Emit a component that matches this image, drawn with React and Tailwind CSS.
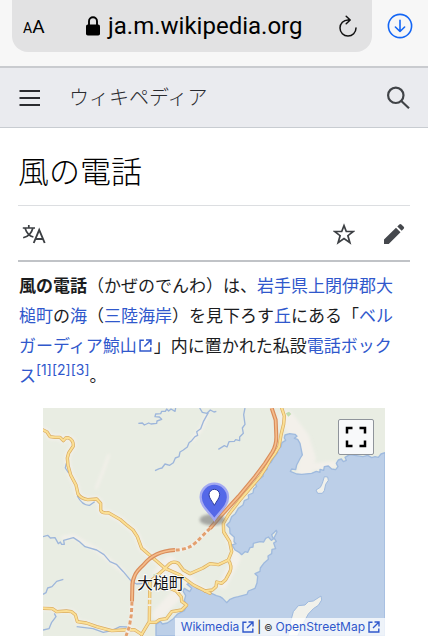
import React from 'react'

const TRUNK = "M686 0 L698 36 L700 86 Q700 112 688 132 L666 166 L636 206 L586 266 L536 321 L501 361"
const TRUNK_SOUTH = "M396 426 Q364 428 341 439 Q318 450 301 471 Q282 488 276 501 Q267 520 268 536 L267 581"
const TUNNELS = ["M501 361 L481 381 Q456 408 441 416 Q420 426 396 426", "M267 581 L265 620 L259 656 L249 684"]

const ROADS = [
  "M0 66 L12 72 L21 86 L36 88 L51 88 L61 98 L68 90 L76 89 Q92 96 91 114 L77 135 L73 150 L75 172 L83 201 L99 231 L105 258 Q114 272 134 275 L161 273 L173 286 L173 306 Q176 317 196 314 L231 334 L251 351 L270 366 L283 386 L296 421 L331 451 L366 481 L411 501 L451 531 L501 556",
  "M716 0 L724 24 L722 48 L714 81 L708 116 L696 136 L681 156 L668 180 L651 206 L621 241 L591 276 L556 321 L541 346 L542 372 L560 401 L566 431 L556 456 L526 470 L501 467 L480 480 L441 497 L421 486 L406 466 Q391 458 380 467 L361 486 L321 521 L320 560 L319 641 L296 679",
  "M556 456 Q568 474 561 491 L548 515 L536 526 L521 522 L519 536 L508 546 L486 549",
  "M381 541 L401 550 L415 567 L416 580 L431 591 L416 606 L386 611 L370 632 L350 635 L338 643 L321 643",
  "M0 601 L28 602 L41 611 L70 609 L86 611 L97 620 L103 641 L130 645 L161 656 L206 668 L241 666 L274 665 L296 679",
]

const RIVERS = [
  "M286 46 L298 45 L304 51 L317 45 L324 48 L341 46 L342 39 L356 34 L349 27 L336 26 L338 18 L353 17 L356 10 L367 10 L371 3 L377 9 L384 3 L396 10 L398 0",
  "M336 188 L349 182 L357 180 L366 168 L380 172 L391 164 L397 150 L408 146 L411 132 L421 126 L433 117 L438 104 L446 98 L456 86 L464 82 L461 71 L473 62 L481 41 L496 14",
  "M526 124 L544 113 L552 117 L558 101 L574 100 L578 95 L590 98 L590 87 L601 76 L598 60 L606 49 L602 20 L606 0",
  "M470 0 L478 13 L492 16 L502 6 L513 12 L520 10",
  "M0 386 L14 382 L22 390 L36 389 L46 407 L52 402 L56 409 L64 409 L62 397 L91 389 L108 400 L126 416 L161 426 L183 440 L201 461 L220 469 L241 491 L266 521 L281 528 L301 526",
  "M0 559 L9 554 L14 540 L27 536 L41 520 L61 514",
  "M0 666 L18 662 L26 643 L39 626 L34 616",
  "M70 166 L67 180 L77 195",
  "M103 264 Q118 293 140 292 L155 281",
  "M101 656 L150 662 L181 673 L206 668 L231 656 L251 657 L266 668",
]

const SEA = "M1026 134 L1014 138 L1006 148 L996 146 L986 149 L974 142 L960 146 L920 140 L906 148 L910 157 L901 161 L895 153 L886 156 L880 166 L885 176 L878 185 L866 183 L856 174 L844 176 L842 187 L831 184 L831 193 L820 190 L806 196 L776 199 L761 198 L742 190 L746 183 L758 185 L761 171 L772 150 L778 141 L771 106 L764 94 L754 91 L762 85 L756 79 L740 77 L726 81 L724 90 L728 97 L717 104 L714 116 L702 126 L704 134 L691 151 L684 163 L671 171 L673 183 L662 193 L660 205 L649 214 L636 226 L641 235 L632 243 L630 255 L616 261 L617 272 L604 278 L600 291 L586 301 L577 317 L566 326 L560 342 L551 351 L560 360 L561 376 L574 388 L573 401 L579 407 L567 411 L576 426 L590 434 L596 440 L606 431 L614 433 L621 419 L630 417 L631 406 L651 401 L662 402 L668 391 L676 387 L685 397 L691 393 L686 380 L694 373 L700 367 L702 372 L693 390 L700 400 L692 405 L698 422 L687 424 L686 437 L675 444 L676 454 L664 464 L652 480 L651 490 L636 497 L644 505 L642 525 L636 541 L616 549 L612 559 L586 566 L573 569 L561 574 L551 584 L539 571 L531 566 L520 563 L506 556 L486 549 L461 541 L451 530 L441 524 L432 529 L446 541 L440 551 L424 541 L420 549 L428 563 L424 578 L432 592 L424 608 L404 618 L391 632 L373 645 L358 648 L352 640 L339 649 L339 684 L1026 684 Z"

function CoastMap() {
  return (
    <svg viewBox="0 0 1026 684" className="block w-full h-full" role="img" aria-label="大槌町の地図">
      <defs>
        <filter id="soft"><feGaussianBlur stdDeviation="5" /></filter>
      </defs>
      <rect width="1026" height="684" fill="#e9ede3" />

      {/* valleys and settlements */}
      <g fill="none" stroke="#f3f0ea" strokeLinecap="round" strokeLinejoin="round" filter="url(#soft)">
        <path strokeWidth="18" d={ROADS[0]} />
        <path strokeWidth="14" d={ROADS[4]} />
        <path strokeWidth="12" d="M60 389 L91 385 L161 426 L241 491" />
        <path strokeWidth="12" d="M450 95 L475 60 L492 20" />
        <path strokeWidth="8" d="M197 142 L180 190 L160 240" />
        <path strokeWidth="34" d="M345 500 L380 460 L400 500 L440 520" />
        <path strokeWidth="34" d="M345 620 L400 560" />
        <path strokeWidth="26" d="M560 390 L580 450 L540 530" />
        <path strokeWidth="46" d="M730 30 L775 90 L795 150 L785 185" />
        <path strokeWidth="22" d="M800 178 L870 170" />
      </g>

      <path d={SEA} fill="#bccfe8" stroke="#9fbade" strokeWidth="4" strokeLinejoin="round" />
      <g fill="#f1f1eb" stroke="#9fbade" strokeWidth="3" strokeLinejoin="round">
        <path d="M844 206 L854 207 L856 217 L848 229 L844 248 L838 256 L824 256 L819 246 L832 238 L838 226 Z" />
        <path d="M735 684 L743 640 L751 611 L766 593 L786 591 L796 581 L811 579 L834 564 L836 576 L826 592 L811 602 L796 618 L784 640 L764 684 Z" />
      </g>
      <path d="M728 16 L738 11 L745 18 L736 26 Z M330 500 L345 494 L351 504 L336 508 Z" fill="#bfdcae" />

      <g fill="none" stroke="#9db6db" strokeWidth="4" strokeLinejoin="round">
        {RIVERS.map((d) => <path key={d} d={d} />)}
      </g>

      <g fill="none" strokeLinecap="round" strokeLinejoin="round">
        {ROADS.map((d) => <path key={d} d={d} stroke="#d9ac62" strokeWidth="10" />)}
        {ROADS.map((d) => <path key={d} d={d} stroke="#fbdf94" strokeWidth="6" />)}
      </g>
      <g fill="none" strokeLinejoin="round">
        <path d={TRUNK} stroke="#d98d5c" strokeWidth="12" />
        <path d={TRUNK} stroke="#f5bd8b" strokeWidth="5" />
        <path d={TRUNK_SOUTH} stroke="#d98d5c" strokeWidth="12" />
        <path d={TRUNK_SOUTH} stroke="#f5bd8b" strokeWidth="5" />
        {TUNNELS.map((d) => <path key={d} d={d} stroke="#f3f0ea" strokeWidth="12" />)}
        {TUNNELS.map((d) => <path key={d} d={d} stroke="#e3a06f" strokeWidth="9" strokeDasharray="12 7" />)}
        <path d="M320 570 L320 604" stroke="#f3f0ea" strokeWidth="12" strokeDasharray="5 14" />
      </g>

      {/* marker */}
      <ellipse cx="508" cy="335" rx="38" ry="17" fill="#777" opacity="0.6" filter="url(#soft)" />
      <path d="M514 335 C500 312 473 296 473 268 A41 41 0 0 1 555 268 C555 296 528 312 514 335 Z" fill="#5468e8" stroke="#a3a9f2" strokeWidth="7" />
      <path d="M514 292 C508 280 498 270 498 260 A16 16 0 0 1 530 260 C530 270 520 280 514 292 Z" fill="#fff" stroke="#2b3a9c" strokeWidth="3" />

      <text
        x="283" y="543" fontSize="47" fill="#111" stroke="#fff" strokeWidth="5" paintOrder="stroke"
        className="font-['Noto_Sans_CJK_JP',sans-serif]"
      >
        大槌町
      </text>
    </svg>
  )
}

function ExternalIcon({ className }) {
  return (
    <svg viewBox="0 0 12 12" className={className} fill="none" stroke="currentColor" strokeWidth="1.4" aria-hidden="true">
      <path d="M4.5 1.2H1v9.8h9.8V7.5M6.5 1H11v4.5M11 1L5 7" />
    </svg>
  )
}

function A({ children }) {
  return <a href="#" className="text-[#3058cc]">{children}</a>
}

function BrowserBar() {
  return (
    <div className="flex h-[66px] bg-[#f7f7f7] pl-3">
      <div className="flex h-[52px] flex-1 items-center rounded-b-2xl bg-[#e2e2e3] pl-[11px] pr-3.5 text-black">
        <button type="button" aria-label="ページ設定" className="flex items-baseline font-[Roboto,sans-serif] leading-none">
          <span className="text-[14px]">A</span>
          <span className="text-[19px]">A</span>
        </button>
        <div className="flex flex-1 items-center justify-center gap-2 pl-1.5">
          <svg viewBox="0 0 14 20" className="w-3.5 h-5" aria-hidden="true">
            <rect y="8.5" width="14" height="11" rx="1.8" fill="#000" />
            <path d="M3 9V5.2a4 4 0 0 1 8 0V9" fill="none" stroke="#000" strokeWidth="1.9" />
          </svg>
          <span className="font-[Roboto,sans-serif] text-[24px] leading-8">ja.m.wikipedia.org</span>
        </div>
        <button type="button" aria-label="再読み込み">
          <svg viewBox="0 0 20 22" className="w-5 h-[22px]" fill="none" stroke="#111" strokeWidth="1.5" strokeLinecap="round" strokeLinejoin="round">
            <path d="M11.5 5H10a8 8 0 1 0 8 8M8.2 1.2L12.2 5 8.2 8.8" />
          </svg>
        </button>
      </div>
      <div className="flex h-[52px] w-14 items-center justify-center">
        <button type="button" aria-label="ダウンロード">
          <svg viewBox="0 0 26 26" className="size-[26px]" fill="none" stroke="#1366f5" strokeWidth="1.6" strokeLinecap="round" strokeLinejoin="round">
            <circle cx="13" cy="13" r="11.6" />
            <path d="M13 7.2v11.2M8.4 14l4.6 4.5 4.6-4.5" />
          </svg>
        </button>
      </div>
    </div>
  )
}

function SiteHeader() {
  return (
    <header className="flex h-[62px] items-center border-t-2 border-b border-t-[#c9cbcf] border-b-[#c8ccd1] bg-[#eaebef] pl-[19px] pr-[18px]">
      <button type="button" aria-label="メニュー">
        <svg viewBox="0 0 22 18" className="w-[22px] h-[18px]" stroke="#2a2b2f" strokeWidth="2">
          <path d="M0.5 2H21M0.5 9H21M0.5 16H21" />
        </svg>
      </button>
      <a href="#" className="ml-7 text-[20px] font-light leading-8 text-[#2a2b2f]">ウィキペディア</a>
      <button type="button" aria-label="検索" className="ml-auto">
        <svg viewBox="0 0 24 24" className="size-6" fill="none" stroke="#404347" strokeWidth="2.2">
          <circle cx="9.8" cy="9.3" r="7.7" />
          <path d="M15.3 15l7.7 7.2" />
        </svg>
      </button>
    </header>
  )
}

export default function App() {
  return (
    <div className="min-h-screen bg-white font-[Inter,'Noto_Sans_CJK_JP',sans-serif] text-[#1b1c1e]" lang="ja">
      <BrowserBar />
      <SiteHeader />

      <main className="px-[18px] pt-5 pb-1">
        <h1 className="border-b border-[#dcdee1] pt-1 pb-[13px] text-[31px] font-light leading-10 text-black">風の電話</h1>

        {/* Page actions */}
        <div className="flex h-14 items-center border-b-2 border-[#c0c3c7] pl-1 pr-[5px] pt-px">
          <button type="button" aria-label="言語">
            <svg viewBox="0 0 24 20" className="w-6 h-5" fill="none" stroke="#3c3f43" strokeWidth="1.7">
              <path d="M0.8 4H13M6.8 1v3M10.8 4.2C9.6 9.2 5.8 12.5 1.2 13.8M3.2 4.5C4.6 9 7.5 12 11.4 13" />
              <path d="M11.7 19L17.2 6 22.7 19M13.4 15h7.6" strokeWidth="1.9" />
            </svg>
          </button>
          <button type="button" aria-label="ウォッチリスト" className="ml-auto">
            <svg viewBox="0 0 22 22" className="size-[22px]" fill="none" stroke="#3c3f43" strokeWidth="1.7">
              <path d="M11 2.6l2.3 5.9h7l-5.4 4.2 2 7-5.9-4.1-5.9 4.1 2-7-5.4-4.2h7z" />
            </svg>
          </button>
          <button type="button" aria-label="編集" className="ml-7">
            <svg viewBox="0 0 22 22" className="size-[22px]" fill="#45484d">
              <path d="M1 16.5L13 4.7l4.5 4.5L5.7 21H1z M14.3 3.4l2-2a1.5 1.5 0 0 1 2.1 0l2.3 2.3a1.5 1.5 0 0 1 0 2.1l-2 2z" />
            </svg>
          </button>
        </div>

        <p className="mt-[9px] pl-px pr-3 text-[17px] leading-[30px]">
          <b className="font-bold">風の電話</b>（かぜのでんわ）は、<A>岩手県上閉伊郡大槌町</A>の<A>海</A>（<A>三陸海岸</A>）を見下ろす<A>丘</A>にある「<A>ベルガーディア鯨山<ExternalIcon className="mx-0.5 inline size-[13px] align-baseline" /></A>」内に置かれた私設<A>電話ボックス</A><sup className="text-[14px] leading-none"><A>[1]</A><A>[2]</A><A>[3]</A></sup>。
        </p>

        <div className="relative mx-[25px] mt-[17px] aspect-[3/2]">
          <CoastMap />
          <button type="button" aria-label="全画面表示" className="absolute right-[11px] top-[11px] flex size-9 items-center justify-center rounded-xs border border-[#8f949b] bg-[#f8f9fa]">
            <svg viewBox="0 0 22 22" className="size-[22px]" fill="none" stroke="#000" strokeWidth="2.5">
              <path d="M2 7.5V2h5.5M14.5 2H20v5.5M20 14.5V20h-5.5M7.5 20H2v-5.5" />
            </svg>
          </button>
          <div className="absolute bottom-0 right-0 flex h-[18px] items-center gap-[3px] bg-white/75 pl-1.5 pr-[5px] text-[12px] leading-none">
            <A>Wikimedia</A>
            <ExternalIcon className="size-3 text-[#3058cc]" />
            <span>|</span>
            <span className="text-[9px]">©</span>
            <A>OpenStreetMap</A>
            <ExternalIcon className="size-3 text-[#3058cc]" />
          </div>
        </div>
      </main>
    </div>
  )
}
